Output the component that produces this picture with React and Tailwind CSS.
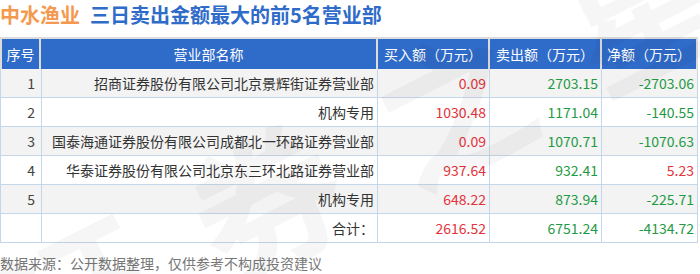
import React from 'react';

const rows = [
  {no: '1', name: '招商证券股份有限公司北京景辉街证券营业部', buy: '0.09', sell: '2703.15', net: '-2703.06'},
  {no: '2', name: '机构专用', buy: '1030.48', sell: '1171.04', net: '-140.55'},
  {no: '3', name: '国泰海通证券股份有限公司成都北一环路证券营业部', buy: '0.09', sell: '1070.71', net: '-1070.63'},
  {no: '4', name: '华泰证券股份有限公司北京东三环北路证券营业部', buy: '937.64', sell: '932.41', net: '5.23'},
  {no: '5', name: '机构专用', buy: '648.22', sell: '873.94', net: '-225.71'},
];

const total = {buy: '2616.52', sell: '6751.24', net: '-4134.72'};

function netColor(v) {
  return v.startsWith('-') ? 'text-[#1f9a45]' : 'text-[#e5323b]';
}

function BodyRow({row, shaded}) {
  return (
    <div className={`flex h-[29px] border-b border-[#c4d7ea] text-[14px] leading-[28px] ${shaded ? 'bg-[#f3f3f3]' : 'bg-white'}`}>
      <div className="w-[41px] shrink-0 border-r border-[#c4d7ea] pr-[6px] text-right text-[#444]">{row.no}</div>
      <div className="w-[336px] shrink-0 border-r border-[#c4d7ea] pr-[3px] text-right text-[#333] whitespace-nowrap">{row.name}</div>
      <div className="w-[112px] shrink-0 border-r border-[#c4d7ea] pr-[3px] text-right text-[#e5323b]">{row.buy}</div>
      <div className="w-[112px] shrink-0 border-r border-[#c4d7ea] pr-[3px] text-right text-[#1f9a45]">{row.sell}</div>
      <div className={`w-[96px] shrink-0 border-r border-[#c4d7ea] pr-[3px] text-right ${netColor(row.net)}`}>{row.net}</div>
    </div>
  );
}

export default function App() {
  return (
    <div
      className="relative h-[274px] w-[700px] overflow-hidden bg-white"
      style={{fontFamily: '"Noto Sans CJK SC", "Noto Sans", sans-serif'}}
    >
      <div className="flex h-[30px] items-center whitespace-nowrap text-[20px] font-bold leading-none">
        <span className="text-[#f5994f]">中水渔业</span>
        <span className="ml-[10px] text-[#2f6bc9]">三日卖出金额最大的前5名营业部</span>
      </div>

      <div className="mt-[7px] w-[698px]">
        {/* header */}
        <div className="flex gap-[2px] border-l-2 border-r-2 border-t-2 border-[#dcdcdc] bg-[#dcdcdc] text-[14px] leading-[30px] text-white">
          <div className="w-[37px] bg-[#2f6bc9] text-center">序号</div>
          <div className="w-[335px] bg-[#2f6bc9] text-center">营业部名称</div>
          <div className="w-[110px] bg-[#2f6bc9] text-center">买入额（万元）</div>
          <div className="w-[110px] bg-[#2f6bc9] text-center">卖出额（万元）</div>
          <div className="w-[94px] bg-[#2f6bc9] text-center">净额（万元）</div>
        </div>

        <div className="border-l border-[#c4d7ea]">
          {rows.map((row, i) => (
            <BodyRow key={row.no} row={row} shaded={i % 2 === 0} />
          ))}
          <BodyRow row={{no: '', name: '合计：', ...total}} shaded={false} />
        </div>
      </div>

      <div className="mt-[11px] text-[14px] leading-[18px] text-[#777]">数据来源：公开数据整理，仅供参考不构成投资建议</div>

      {/* watermark */}
      <div className="pointer-events-none absolute left-[10px] top-[250px] origin-left -rotate-[27deg] whitespace-nowrap text-[150px] font-bold leading-none tracking-[60px] text-black/[0.035]">
        证券之星
      </div>
    </div>
  );
}
